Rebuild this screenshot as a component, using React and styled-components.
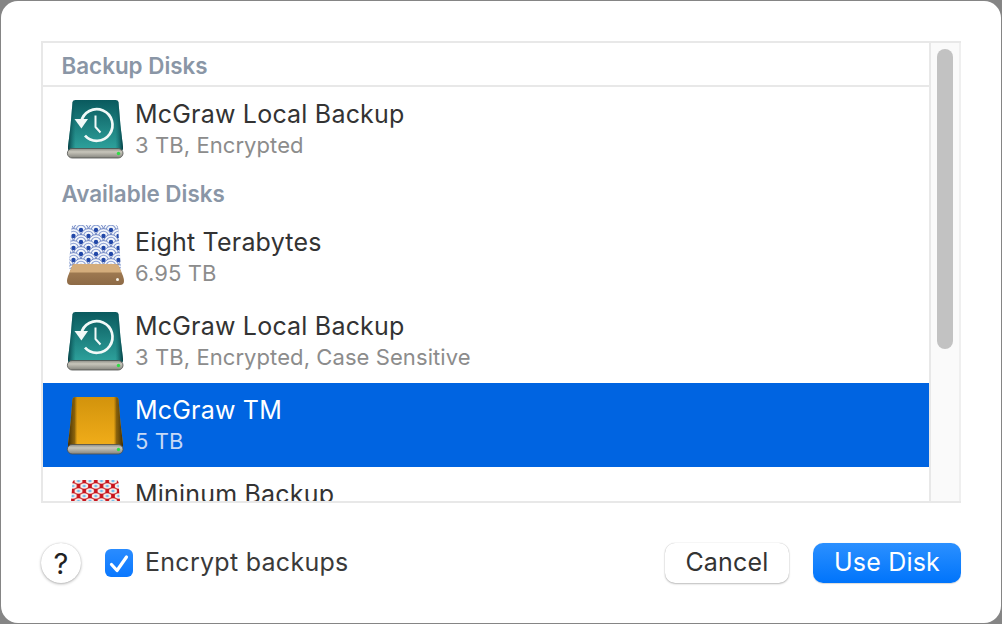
import React from "react";
import styled, { createGlobalStyle } from "styled-components";

const Global = createGlobalStyle`
  html, body { margin: 0; padding: 0; width: 1002px; height: 624px; overflow: hidden; background: #858585; }
  * { box-sizing: border-box; }
`;

const Backdrop = styled.div`
  width: 1002px;
  height: 624px;
  padding: 1px;
  font-family: Inter, "Liberation Sans", sans-serif;
`;

const Sheet = styled.div`
  height: 622px;
  background: #fff;
  border-radius: 17px;
  padding: 40px 40px 0 40px;
  display: flex;
  flex-direction: column;
`;

const Frame = styled.div`
  height: 462px;
  flex: none;
  border: 2px solid #e8e8e8;
  display: flex;
`;

const List = styled.div`
  width: 886px;
  overflow: hidden;
  flex: none;
`;

const Track = styled.div`
  flex: 1;
  background: #fafafa;
  border-left: 2px solid #e8e8e8;
  border-right: 2px solid #efefef;
  padding: 6px 6px 0 6px;
`;

const Thumb = styled.div`
  height: 300px;
  width: 16px;
  border-radius: 8px;
  background: #c2c2c2;
`;

const Header = styled.div`
  height: 44px;
  padding: ${(p) => (p.$ruled ? "2px" : "0")} 0 0 18.5px;
  display: flex;
  align-items: center;
  font-size: 22.4px;
  font-weight: 600;
  color: #8a96a6;
  border-bottom: ${(p) => (p.$ruled ? "2px solid #e8e8e8" : "none")};
`;

const Row = styled.div`
  height: 84px;
  flex: none;
  display: flex;
  align-items: center;
  padding-left: 22px;
  background: ${(p) => (p.$selected ? "#0064e1" : "transparent")};
`;

const Icon = styled.svg`
  width: 60px;
  height: 64px;
  flex: none;
`;

const Text = styled.div`
  margin-left: 10px;
  display: flex;
  flex-direction: column;
  gap: 3px;
`;

const Name = styled.div`
  font-size: 25px;
  line-height: 29px;
  letter-spacing: 0.2px;
  color: ${(p) => (p.$selected ? "#fff" : "#333")};
`;

const Detail = styled.div`
  font-size: 22px;
  line-height: 26px;
  letter-spacing: 0.08px;
  color: ${(p) => (p.$selected ? "#c6d9f5" : "#8c8c8c")};
`;

const Footer = styled.div`
  display: flex;
  align-items: center;
  margin-top: 38px;
  height: 44px;
  flex: none;
`;

const Help = styled.div`
  width: 40px;
  height: 40px;
  border-radius: 50%;
  background: #fff;
  box-shadow: 0 1px 3px rgba(0, 0, 0, 0.3), 0 0 1px rgba(0, 0, 0, 0.2);
  display: flex;
  align-items: center;
  justify-content: center;
  font-size: 29px;
  font-weight: 400;
  color: #222;
`;

const CheckLabel = styled.div`
  display: flex;
  align-items: center;
  margin-left: 24px;
  gap: 12px;
  font-size: 25px;
  letter-spacing: 0.28px;
  color: #3a3a3a;
`;

const LabelText = styled.span`
  margin-top: -2px;
`;

const Check = styled.div`
  width: 28px;
  height: 28px;
  border-radius: 6px;
  background: linear-gradient(#2a8cff, #0a78ff);
  display: flex;
  align-items: center;
  justify-content: center;
`;

const Spacer = styled.div`
  flex: 1;
`;

const Button = styled.div`
  height: 40px;
  width: ${(p) => p.$w}px;
  margin-left: ${(p) => p.$ml || 0}px;
  padding-bottom: 2px;
  border-radius: 10px;
  display: flex;
  align-items: center;
  justify-content: center;
  font-size: 25px;
  letter-spacing: 0.2px;
  background: ${(p) => (p.$primary ? "linear-gradient(#2b90ff, #0074fb)" : "#fff")};
  color: ${(p) => (p.$primary ? "#fff" : "#333")};
  box-shadow: ${(p) =>
    p.$primary
      ? "0 0.5px 1px rgba(0,0,0,0.15)"
      : "0 1px 2px rgba(0,0,0,0.25), 0 0 1px rgba(0,0,0,0.25)"};
`;

const Base = ({ id }) => (
  <>
    <defs>
      <linearGradient id={id} x1="0" y1="0" x2="0" y2="1">
        <stop offset="0" stopColor="#8d8d86" />
        <stop offset="0.35" stopColor="#c8c6bb" />
        <stop offset="1" stopColor="#85857e" />
      </linearGradient>
    </defs>
    <rect x="2.4" y="51.5" width="55.6" height="9.5" rx="4.7" fill={`url(#${id})`} stroke="#4c4e4b" strokeWidth="0.8" />
    <circle cx="53.5" cy="56.5" r="1.7" fill="#2fdc45" />
  </>
);

const BODY = "M7.5 5 Q8 3 10.5 3 H50.5 Q53 3 53.5 5 Q55 28 58 50 Q58.5 54 55 54 H6 Q2.5 54 3 50 Q6 28 7.5 5 Z";

const TimeMachineDrive = ({ id }) => (
  <Icon viewBox="0 0 60 64">
    <defs>
      <linearGradient id={`${id}b`} x1="0" y1="0" x2="0" y2="1">
        <stop offset="0" stopColor="#0a5a5e" />
        <stop offset="1" stopColor="#2fa49e" />
      </linearGradient>
      <linearGradient id={`${id}s`} x1="0" y1="0" x2="1" y2="0">
        <stop offset="0" stopColor="#063a40" />
        <stop offset="0.14" stopColor="#0d6366" stopOpacity="0" />
        <stop offset="0.86" stopColor="#0d6366" stopOpacity="0" />
        <stop offset="1" stopColor="#063a40" />
      </linearGradient>
    </defs>
    <path d={BODY} fill={`url(#${id}b)`} />
    <path d={BODY} fill={`url(#${id}s)`} />
    <g fill="none" stroke="#f2f9f8" strokeWidth="2.7">
      <path d="M16.2 25 A 15.8 15.8 0 1 1 20 38.6" />
      <path d="M30.5 18.5 V30 L35.5 35.5" strokeWidth="2" strokeLinejoin="round" />
    </g>
    <path d="M9.5 22 H23 L16.4 31.5 Z" fill="#f2f9f8" />
    <Base id={`${id}g`} />
  </Icon>
);

const WAVE_ROWS = [0, 1, 2, 3, 4, 5, 6, 7, 8];
const WAVE_COLS = [0, 1, 2, 3, 4, 5];

const WaveDrive = () => (
  <Icon viewBox="0 0 60 64">
    <defs>
      <clipPath id="waveClip">
        <path d="M6.5 2 Q7 0 9.5 0 H50 Q52.5 0 53 2 L56 44 H4 Z" />
      </clipPath>
      <linearGradient id="wood" x1="0" y1="0" x2="0" y2="1">
        <stop offset="0" stopColor="#a98358" />
        <stop offset="1" stopColor="#8d6a46" />
      </linearGradient>
    </defs>
    <g clipPath="url(#waveClip)">
      <rect x="0" y="0" width="60" height="46" fill="#eef2f9" />
      {WAVE_ROWS.map((r) =>
        WAVE_COLS.map((c) => {
          const cx = c * 15 + (r % 2 ? 7.5 : 0) + 1;
          const cy = r * 6 + 5;
          return (
            <g key={`${r}-${c}`}>
              <circle cx={cx} cy={cy} r="7.4" fill="#f3f6fb" stroke="#5570b8" strokeWidth="0.8" />
              <circle cx={cx} cy={cy} r="4.8" fill="#f3f6fb" stroke="#8ca0d2" strokeWidth="1.1" />
              <circle cx={cx} cy={cy} r="2.2" fill="#2147a8" />
            </g>
          );
        })
      )}
    </g>
    <path d="M9 39 H50 Q53 39 53.8 41 L58 51 Q59 54 59 56 Q59 60 55 60 H6 Q2 60 2 56 Q2 54 3 51 L7.2 41 Q8 39 9 39 Z" fill="url(#wood)" />
    <path d="M9 39 H50 Q53 39 53.8 41 L56.5 47.5 H4.5 L7.2 41 Q8 39 9 39 Z" fill="#d4ad7c" />
    <circle cx="52.5" cy="54.5" r="1.5" fill="#f8f3e8" />
  </Icon>
);

const GoldDrive = () => (
  <Icon viewBox="0 0 60 64">
    <defs>
      <linearGradient id="gold" x1="0" y1="0" x2="0" y2="1">
        <stop offset="0" stopColor="#d2930c" />
        <stop offset="1" stopColor="#f2ae1a" />
      </linearGradient>
      <linearGradient id="goldS" x1="0" y1="0" x2="1" y2="0">
        <stop offset="0" stopColor="#3f2c06" />
        <stop offset="0.12" stopColor="#6b4c08" stopOpacity="0.75" />
        <stop offset="0.17" stopColor="#8a6208" stopOpacity="0" />
        <stop offset="0.83" stopColor="#8a6208" stopOpacity="0" />
        <stop offset="0.88" stopColor="#6b4c08" stopOpacity="0.75" />
        <stop offset="1" stopColor="#3f2c06" />
      </linearGradient>
    </defs>
    <g transform="translate(0 1)">
      <path d={BODY} fill="url(#gold)" />
      <path d={BODY} fill="url(#goldS)" />
    </g>
    <Base id="goldBase" />
  </Icon>
);

const RedDrive = () => (
  <Icon viewBox="0 0 60 64">
    <defs>
      <pattern id="red" width="11.5" height="10" patternUnits="userSpaceOnUse" patternTransform="translate(2 4)">
        <rect width="11.5" height="10" fill="#c8141b" />
        <ellipse cx="5.75" cy="5" rx="4" ry="2.7" fill="#f6eeea" />
        <ellipse cx="5.75" cy="5" rx="1.6" ry="1.2" fill="#76bdea" />
        <ellipse cx="0" cy="0" rx="4" ry="2.7" fill="#f6eeea" />
        <ellipse cx="11.5" cy="0" rx="4" ry="2.7" fill="#f6eeea" />
        <ellipse cx="0" cy="10" rx="4" ry="2.7" fill="#f6eeea" />
        <ellipse cx="11.5" cy="10" rx="4" ry="2.7" fill="#f6eeea" />
        <ellipse cx="0" cy="0" rx="1.6" ry="1.2" fill="#76bdea" />
        <ellipse cx="11.5" cy="0" rx="1.6" ry="1.2" fill="#76bdea" />
        <ellipse cx="0" cy="10" rx="1.6" ry="1.2" fill="#76bdea" />
        <ellipse cx="11.5" cy="10" rx="1.6" ry="1.2" fill="#76bdea" />
      </pattern>
    </defs>
    <path d={BODY} fill="url(#red)" />
    <Base id="redBase" />
  </Icon>
);

const Disk = ({ icon, name, detail, selected }) => (
  <Row $selected={selected}>
    {icon}
    <Text>
      <Name $selected={selected}>{name}</Name>
      <Detail $selected={selected}>{detail}</Detail>
    </Text>
  </Row>
);

export default function App() {
  return (
    <>
      <Global />
      <Backdrop>
        <Sheet>
          <Frame>
            <List>
              <Header $ruled>Backup Disks</Header>
              <Disk icon={<TimeMachineDrive id="tm1" />} name="McGraw Local Backup" detail="3 TB, Encrypted" />
              <Header>Available Disks</Header>
              <Disk icon={<WaveDrive />} name="Eight Terabytes" detail="6.95 TB" />
              <Disk icon={<TimeMachineDrive id="tm2" />} name="McGraw Local Backup" detail="3 TB, Encrypted, Case Sensitive" />
              <Disk icon={<GoldDrive />} name="McGraw TM" detail="5 TB" selected />
              <Disk icon={<RedDrive />} name="Mininum Backup" detail="2 TB" />
            </List>
            <Track>
              <Thumb />
            </Track>
          </Frame>
          <Footer>
            <Help>?</Help>
            <CheckLabel>
              <Check>
                <svg width="20" height="20" viewBox="0 0 20 20">
                  <path d="M2.5 11.5 L8 17.5 L17.5 4" fill="none" stroke="#fff" strokeWidth="3.2" strokeLinecap="round" strokeLinejoin="round" />
                </svg>
              </Check>
              <LabelText>Encrypt backups</LabelText>
            </CheckLabel>
            <Spacer />
            <Button $w={124}>Cancel</Button>
            <Button $primary $ml={24} $w={148}>Use Disk</Button>
          </Footer>
        </Sheet>
      </Backdrop>
    </>
  );
}
